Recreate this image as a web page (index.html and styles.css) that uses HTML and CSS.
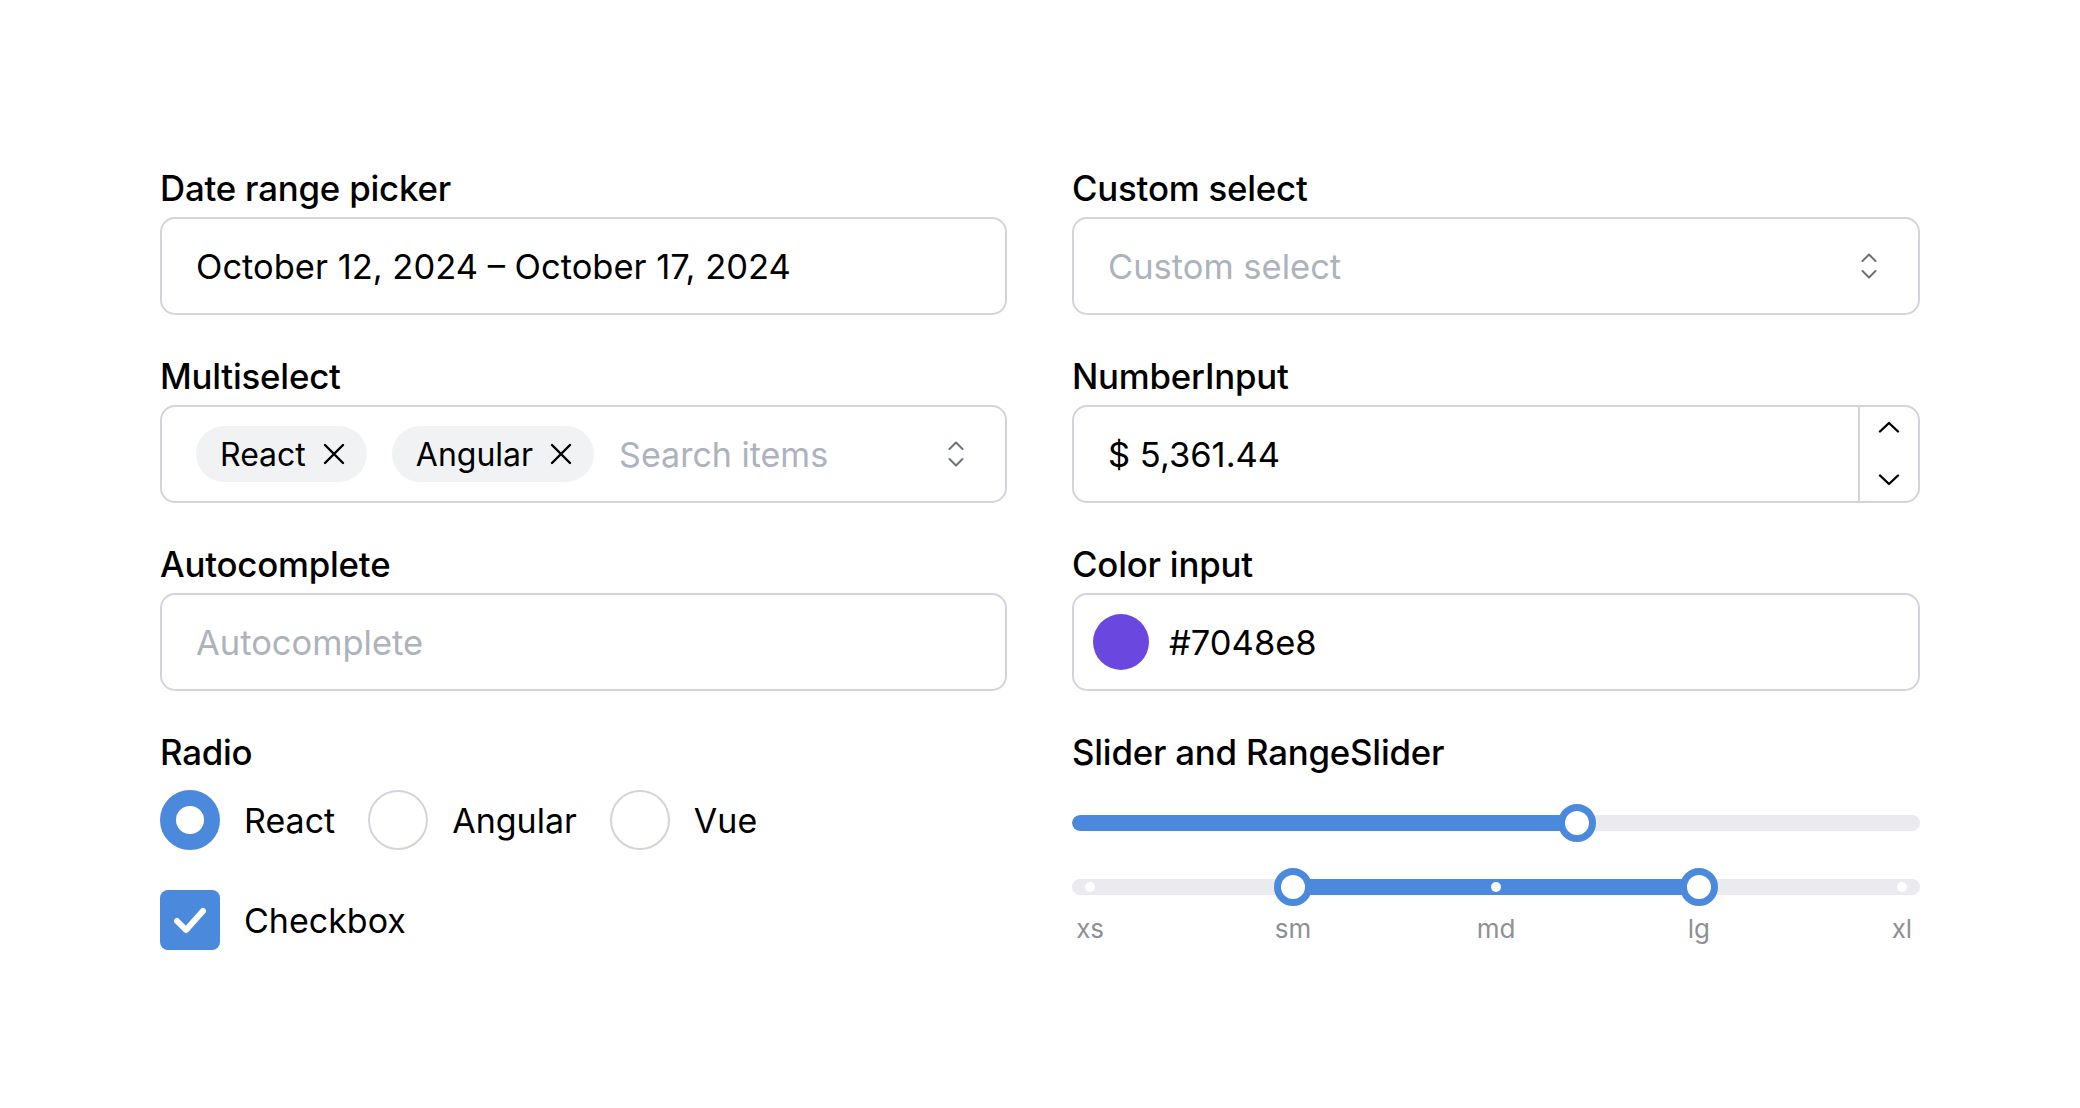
FILE: index.html
```html
<!DOCTYPE html>
<html lang="en">
<head>
<meta charset="utf-8">
<title>Form controls</title>
<link rel="stylesheet" href="styles.css">
</head>
<body>
<main class="form">
  <div class="field">
    <div class="label">Date range picker</div>
    <div class="box"><span class="value">October 12, 2024 – October 17, 2024</span></div>
  </div>
  <div class="field">
    <div class="label">Custom select</div>
    <div class="box">
      <span class="placeholder grow">Custom select</span>
      <svg class="updown" width="16" height="28" viewBox="0 0 16 28"><path d="M1.5 9 L8 2.5 L14.5 9 M1.5 19 L8 25.5 L14.5 19" fill="none" stroke="#6b717c" stroke-width="2" stroke-linecap="round" stroke-linejoin="round"/></svg>
    </div>
  </div>
  <div class="field">
    <div class="label">Multiselect</div>
    <div class="box multi">
      <span class="chip">React<svg class="x" width="22" height="22" viewBox="0 0 22 22"><path d="M2 2 L20 20 M20 2 L2 20" stroke="#000" stroke-width="2.4" stroke-linecap="round"/></svg></span>
      <span class="chip">Angular<svg class="x" width="22" height="22" viewBox="0 0 22 22"><path d="M2 2 L20 20 M20 2 L2 20" stroke="#000" stroke-width="2.4" stroke-linecap="round"/></svg></span>
      <span class="placeholder grow">Search items</span>
      <svg class="updown" width="16" height="28" viewBox="0 0 16 28"><path d="M1.5 9 L8 2.5 L14.5 9 M1.5 19 L8 25.5 L14.5 19" fill="none" stroke="#6b717c" stroke-width="2" stroke-linecap="round" stroke-linejoin="round"/></svg>
    </div>
  </div>
  <div class="field">
    <div class="label">NumberInput</div>
    <div class="box number">
      <span class="value grow">$ 5,361.44</span>
      <div class="stepper">
        <svg width="22" height="12" viewBox="0 0 22 12"><path d="M2 10.5 L11 2 L20 10.5" fill="none" stroke="#000" stroke-width="2.4" stroke-linecap="round" stroke-linejoin="round"/></svg>
        <svg width="22" height="12" viewBox="0 0 22 12"><path d="M2 1.5 L11 10 L20 1.5" fill="none" stroke="#000" stroke-width="2.4" stroke-linecap="round" stroke-linejoin="round"/></svg>
      </div>
    </div>
  </div>
  <div class="field">
    <div class="label">Autocomplete</div>
    <div class="box"><span class="placeholder">Autocomplete</span></div>
  </div>
  <div class="field">
    <div class="label">Color input</div>
    <div class="box color">
      <span class="swatch"></span>
      <span class="value">#7048e8</span>
    </div>
  </div>
  <div class="field">
    <div class="label">Radio</div>
    <div class="radios">
      <span class="radio-item"><span class="radio checked"></span><span class="opt">React</span></span>
      <span class="radio-item"><span class="radio"></span><span class="opt">Angular</span></span>
      <span class="radio-item"><span class="radio"></span><span class="opt">Vue</span></span>
    </div>
    <div class="check-row">
      <span class="checkbox"><svg width="60" height="60" viewBox="0 0 60 60"><path d="M17 31 L26 40 L43 21" fill="none" stroke="#fff" stroke-width="6" stroke-linecap="round" stroke-linejoin="round"/></svg></span>
      <span class="opt">Checkbox</span>
    </div>
  </div>
  <div class="field">
    <div class="label">Slider and RangeSlider</div>
    <div class="slider">
      <div class="track"><div class="fill" style="left:0;width:60%"></div></div>
      <span class="thumb" style="left:calc(18px + (100% - 36px) * 0.6)"></span>
    </div>
    <div class="slider range">
      <div class="track"><div class="fill" style="left:calc(18px + (100% - 36px) * 0.25);width:calc((100% - 36px) * 0.5)"></div></div>
      <span class="dot" style="left:calc(18px + (100% - 36px) * 0)"></span>
      <span class="dot" style="left:calc(18px + (100% - 36px) * 0.5)"></span>
      <span class="dot" style="left:calc(18px + (100% - 36px) * 1)"></span>
      <span class="thumb" style="left:calc(18px + (100% - 36px) * 0.25)"></span>
      <span class="thumb" style="left:calc(18px + (100% - 36px) * 0.75)"></span>
    </div>
    <div class="ticks">
      <span>xs</span><span>sm</span><span>md</span><span>lg</span><span>xl</span>
    </div>
  </div>
</main>
</body>
</html>
```

FILE: styles.css
```css
* { box-sizing: border-box; }
html, body { margin: 0; padding: 0; background: #fff; }
body {
  font-family: Inter, "Noto Sans", "Liberation Sans", sans-serif;
  color: #000;
}
.form {
  display: grid;
  grid-template-columns: 847px 848px;
  column-gap: 65px;
  row-gap: 41px;
  padding: 168px 0 0 160px;
  align-items: start;
}
.field { display: flex; flex-direction: column; }
.label {
  font-size: 34.8px;
  line-height: 41px;
  font-weight: 500;
  margin-bottom: 8px;
  letter-spacing: -0.2px;
}
.box {
  height: 98px;
  border: 2px solid #d1d5db;
  border-radius: 15px;
  display: flex;
  align-items: center;
  padding: 0 41px 0 34px;
  font-size: 34.5px;
}
.value { color: #000; }
.placeholder { color: #adb3bc; }
.grow { flex: 1; }
.updown { display: block; flex: none; }
.multi { gap: 25px; }
.multi .placeholder { font-size: 34px; }
.chip {
  display: inline-flex;
  align-items: center;
  height: 56px;
  padding: 0 22px 0 24px;
  border-radius: 28px;
  background: #f1f2f4;
  gap: 17px;
  font-size: 32px;
}
.x { display: block; }
.number { padding-right: 0; }
.stepper {
  align-self: stretch;
  width: 60px;
  border-left: 2px solid #d1d5db;
  display: flex;
  flex-direction: column;
  justify-content: space-between;
  align-items: center;
  padding: 14px 0 15px;
}
.stepper svg { display: block; }
.color { padding-left: 19px; gap: 20px; }
.swatch {
  width: 56px;
  height: 56px;
  border-radius: 50%;
  background: #6a48e0;
  flex: none;
}
.radios {
  display: flex;
  align-items: center;
  margin-top: 9px;
  gap: 33px;
}
.radio-item { display: inline-flex; align-items: center; gap: 24px; }
.radio {
  width: 60px;
  height: 60px;
  border-radius: 50%;
  border: 2px solid #d1d5db;
  background: #fff;
}
.radio.checked { border: 16px solid #4a89dc; }
.opt { font-size: 34px; line-height: 41px; }
.check-row { display: flex; align-items: center; gap: 24px; margin-top: 40px; }
.checkbox {
  width: 60px;
  height: 60px;
  border-radius: 8px;
  background: #4a89dc;
}
.checkbox svg { display: block; }
.slider {
  position: relative;
  height: 40px;
  margin-top: 22px;
  display: flex;
  align-items: center;
}
.slider.range { margin-top: 24px; }
.track {
  position: relative;
  width: 100%;
  height: 16px;
  border-radius: 8px;
  background: #eaeaef;
  overflow: hidden;
}
.fill {
  position: absolute;
  top: 0;
  bottom: 0;
  background: #4a89dc;
  border-radius: 8px;
}
.thumb {
  position: absolute;
  top: 50%;
  width: 38px;
  height: 38px;
  margin: -19px 0 0 -19px;
  border-radius: 50%;
  background: #fff;
  border: 7px solid #4a89dc;
}
.dot {
  position: absolute;
  top: 50%;
  width: 10px;
  height: 10px;
  margin: -5px 0 0 -5px;
  border-radius: 50%;
  background: #fff;
}
.ticks {
  display: grid;
  grid-template-columns: repeat(5, 1fr);
  margin: 7px -83.4px 0;
  text-align: center;
  font-size: 26px;
  line-height: 30px;
  color: #8e9097;
}
```
